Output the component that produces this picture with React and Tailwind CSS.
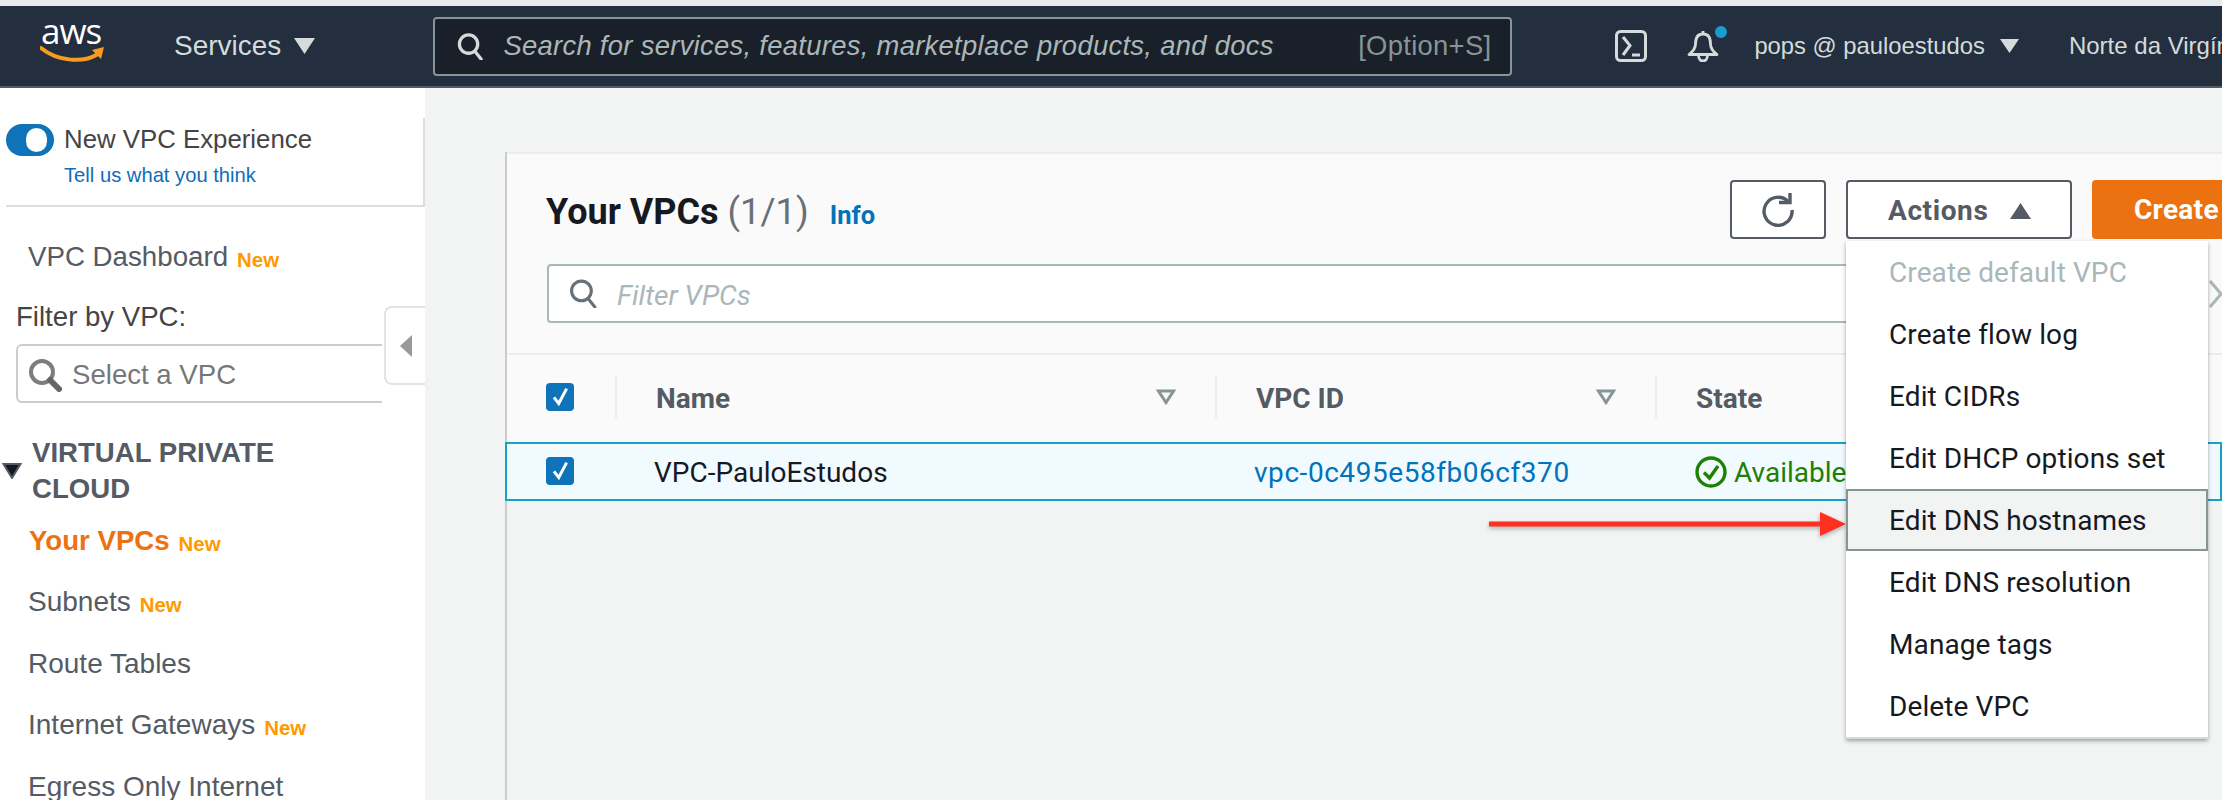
import React from "react";

const Caret = ({ up, className, fill }) => (
  <svg viewBox="0 0 20 16" className={`shrink-0 ${className}`} preserveAspectRatio="none">
    <polygon points={up ? "10,0 20,16 0,16" : "0,0 20,0 10,16"} fill={fill} />
  </svg>
);

const Search = ({ className, color, width = 2.6 }) => (
  <svg viewBox="0 0 28 28" className={className} fill="none" stroke={color} strokeWidth={width} strokeLinecap="round">
    <circle cx="12" cy="11.5" r="9.5" />
    <path d="M18.5 19 L25 27" />
  </svg>
);

const FilterTri = () => (
  <svg viewBox="0 0 20 16" className="w-[20px] h-[16px] shrink-0" fill="none" stroke="#879596" strokeWidth="3">
    <polygon points="2.5,2 17.5,2 10,13.5" />
  </svg>
);

const Check = ({ className }) => (
  <div className={`w-[28px] h-[28px] rounded-[4px] bg-[#0f73b9] flex items-center justify-center shrink-0 ${className || ""}`}>
    <svg viewBox="0 0 20 24" className="w-[19px] h-[21px]" fill="none" stroke="#fff" strokeWidth="3.4">
      <path d="M2.5 13 L8 20 L17 3" />
    </svg>
  </div>
);

const New = () => (
  <span className="text-[20.4px] font-bold text-[#ff9900] ml-[9px] relative top-[3px]">New</span>
);

const NavItem = ({ children, isNew, active }) => (
  <div className={`h-[61.5px] flex items-center pl-[28px] text-[28px] leading-[36px] ${active ? "font-bold text-[#ec7211]" : "text-[#545b64]"}`}>
    <span className={active ? "text-[27.6px] ml-[1px]" : ""}>{children}</span>
    {isNew && <New />}
  </div>
);

const MenuItem = ({ children, disabled, hover }) => (
  <div
    className={`h-[62px] flex items-center pt-[1px] text-[28px] tracking-[0.1px] [font-family:Roboto,sans-serif] ${
      disabled ? "text-[#aab7b8]" : "text-[#16191f]"
    } ${hover ? "bg-[#f2f3f3] border-2 border-[#879596] pl-[41px]" : "pl-[43px]"}`}
  >
    {children}
  </div>
);

const HeadCell = ({ width, children, filter }) => (
  <div className={`${width} h-full flex items-center shrink-0`}>
    <span className="w-[2px] h-[42px] bg-[#eaeded] shrink-0 -mt-[4px]" />
    <span className="ml-[39px] text-[28px] font-bold text-[#545b64]">{children}</span>
    {filter && (
      <span className="ml-auto mr-[39px] -mt-[4px] flex">
        <FilterTri />
      </span>
    )}
  </div>
);

export default function App() {
  return (
    <div className="w-[2222px] h-[800px] overflow-hidden flex flex-col bg-white [font-family:'Liberation_Sans',sans-serif]">
      <div className="h-[6px] bg-[#e8e9ea] shrink-0" />

      <header className="h-[82px] shrink-0 bg-[#232f3e] border-b-2 border-[#545b64] flex items-center text-[#d5dbdb]">
        <div className="w-[65px] ml-[40px] h-[42px] relative shrink-0 -mt-[8px]">
          <span className="absolute left-[1px] -top-[11px] text-[35px] leading-[42px] text-white [font-family:'Open_Sans',sans-serif] tracking-[-1px]">
            aws
          </span>
          <svg viewBox="0 0 65 20" className="absolute left-0 top-[24px] w-[65px] h-[20px]" fill="none">
            <path d="M1 3 C18 17 44 18 58 9" stroke="#f79c1e" strokeWidth="4" strokeLinecap="round" />
            <path d="M52 5 L64 2 L61 14 Z" fill="#f79c1e" />
          </svg>
        </div>
        <span className="ml-[69px] shrink-0 text-[28px] leading-[36px]">Services</span>
        <Caret className="ml-[13px] w-[21px] h-[16px]" fill="#d5dbdb" />

        <div className="ml-[118px] w-[1079px] h-[59px] shrink-0 bg-[#1a2029] border-2 border-[#879596] rounded-[4px] flex items-center pl-[22px]">
          <Search className="w-[27px] h-[27px] shrink-0" color="#d5dbdb" width="3.4" />
          <span className="ml-[19px] text-[27.4px] tracking-[0.3px] italic text-[#aab7b8] whitespace-nowrap">
            Search for services, features, marketplace products, and docs
          </span>
          <span className="ml-auto mr-[19px] text-[27.4px] tracking-[0.3px] text-[#879596] whitespace-nowrap">[Option+S]</span>
        </div>

        <svg viewBox="0 0 32 32" className="ml-[103px] w-[32px] h-[32px] shrink-0" fill="none" stroke="#d5dbdb" strokeWidth="3">
          <rect x="1.5" y="1.5" width="29" height="29" rx="4" />
          <path d="M8 7 L15 15.5 L8 25" />
          <path d="M17 25 L25 25" />
        </svg>

        <div className="ml-[40px] w-[32px] h-[32px] relative shrink-0">
          <svg viewBox="0 0 32 32" className="w-[32px] h-[32px]" fill="none" stroke="#d5dbdb" strokeWidth="2.8" strokeLinejoin="round">
            <path d="M16 1 L16 4 M16 4 C10 4 8.5 9 8.5 14 C8.5 19 6 21.5 2 24.5 L30 24.5 C26 21.5 23.5 19 23.5 14 C23.5 9 22 4 16 4 Z" />
            <path d="M11.5 25 C11.5 33 20.5 33 20.5 25" />
          </svg>
          <span className="absolute -right-[8px] -top-[4px] w-[12px] h-[12px] rounded-full bg-[#1a9ccf]" />
        </div>

        <span className="ml-[35px] shrink-0 text-[23.8px] whitespace-nowrap">pops @ pauloestudos</span>
        <Caret className="ml-[15px] w-[19px] h-[14px]" fill="#d5dbdb" />
        <span className="ml-[50px] shrink-0 text-[24px] whitespace-nowrap">Norte da Virgínia</span>
      </header>

      <div className="flex-1 flex min-h-0">
        <aside className="w-[425px] shrink-0 bg-white relative">
          <div className="mt-[30px] border-r-2 border-[#dddddd]">
            <div className="ml-[6px] border-b-2 border-[#dddddd] flex pt-[3px] pb-[18px]">
              <div className="mt-[3px] w-[48px] h-[32px] rounded-full bg-[#0f73b9] flex items-center justify-end pr-[7px] shrink-0">
                <span className="w-[21px] h-[24px] rounded-full bg-white" />
              </div>
              <div className="ml-[10px]">
                <div className="text-[25.8px] leading-[36px] text-[#444444]">New VPC Experience</div>
                <div className="mt-[6px] text-[20.2px] leading-[24px] text-[#0f6cbd]">Tell us what you think</div>
              </div>
            </div>
          </div>

          <div className="mt-[30px] h-[40px] flex items-center pl-[28px] text-[27.7px] text-[#545b64]">
            VPC Dashboard
            <New />
          </div>
          <div className="mt-[20px] h-[40px] flex items-center pl-[16px] text-[27.6px] text-[#444444]">Filter by VPC:</div>
          <div className="mt-[7px] ml-[16px] w-[366px] h-[59px] border-2 border-r-0 border-[#cccccc] rounded-l-[6px] flex items-center pl-[10px] pt-[2px]">
            <svg viewBox="0 0 34 34" className="w-[34px] h-[34px] shrink-0" fill="none">
              <circle cx="14" cy="14" r="11" stroke="#7d7d7d" strokeWidth="4" />
              <path d="M22 22 L31 31" stroke="#666666" strokeWidth="6" strokeLinecap="round" />
            </svg>
            <span className="ml-[10px] text-[27.6px] text-[#777777]">Select a VPC</span>
          </div>

          <div className="mt-[32px] flex items-center pl-[2px]">
            <svg viewBox="0 0 20 16" className="w-[20px] h-[16px] shrink-0" >
              <polygon points="1.5,1 18.5,1 10,15" fill="#16191f" stroke="#545b64" strokeWidth="2" />
            </svg>
            <div className="ml-[10px] text-[27.6px] leading-[36px] font-bold text-[#545b64]">
              VIRTUAL PRIVATE
              <br />
              CLOUD
            </div>
          </div>

          <div className="mt-[3px]">
            <NavItem active isNew>Your VPCs</NavItem>
            <NavItem isNew>Subnets</NavItem>
            <NavItem>Route Tables</NavItem>
            <NavItem isNew>Internet Gateways</NavItem>
            <NavItem>Egress Only Internet</NavItem>
          </div>

          <div className="absolute left-[384px] top-[218px] w-[42px] h-[79px] bg-white border-2 border-r-0 border-[#e3e3e3] rounded-l-[8px] flex items-center pl-[14px]">
            <svg viewBox="0 0 12 22" className="w-[12px] h-[22px]">
              <polygon points="12,0 12,22 0,11" fill="#999999" />
            </svg>
          </div>
        </aside>

        <main className="flex-1 min-w-0 bg-[#f2f3f3] pl-[80px] pt-[64px] relative flex flex-col [font-family:Roboto,sans-serif]">
          <section className="flex-1 flex flex-col border-l-2 border-[#cccccc]">
            <div className="bg-[#fafafa] border-t-2 border-b-2 border-[#eaeded] pt-[26px] pl-[40px] h-[203px] shrink-0">
              <div className="flex items-center h-[59px]">
                <h1 className="-ml-[1px] mt-[5px] text-[36px] leading-[44px] font-bold text-[#16191f]">Your VPCs</h1>
                <span className="mt-[5px] ml-[9px] text-[36.5px] leading-[44px] text-[#687078]">(1/1)</span>
                <span className="ml-[21px] mt-[11px] text-[25.5px] font-bold text-[#0073bb]">Info</span>

                <button className="ml-auto w-[96px] h-[59px] bg-white border-2 border-[#545b64] rounded-[4px] flex items-center justify-center shrink-0">
                  <svg viewBox="0 0 34 34" className="w-[34px] h-[34px]" fill="none" stroke="#545b64" strokeWidth="3.4">
                    <path d="M27.5 9 A14 14 0 1 0 31 17" />
                    <path d="M18 9.5 L29 9.5 L29 0" />
                  </svg>
                </button>
                <div className="ml-[20px] relative shrink-0">
                  <button className="w-[226px] h-[59px] bg-white border-2 border-[#545b64] rounded-[4px] flex items-center pl-[40px] pt-[2px] text-[28px] tracking-[0.6px] font-bold text-[#545b64]">
                    Actions
                    <Caret up className="ml-[22px] w-[21px] h-[16px]" fill="#545b64" />
                  </button>
                  <div className="absolute left-0 top-[61px] w-[362px] bg-white shadow-[0_2px_4px_rgba(0,0,0,0.35)] z-10 border-b-2 border-[#d5dbdb]">
                    <MenuItem disabled>Create default VPC</MenuItem>
                    <MenuItem>Create flow log</MenuItem>
                    <MenuItem>Edit CIDRs</MenuItem>
                    <MenuItem>Edit DHCP options set</MenuItem>
                    <MenuItem hover>Edit DNS hostnames</MenuItem>
                    <MenuItem>Edit DNS resolution</MenuItem>
                    <MenuItem>Manage tags</MenuItem>
                    <MenuItem>Delete VPC</MenuItem>
                  </div>
                </div>
                <button className="ml-[20px] w-[220px] h-[59px] -mr-[90px] shrink-0 bg-[#ec7211] rounded-[4px] text-left pl-[42px] pt-[1px] text-[28px] tracking-[0.3px] font-bold text-white">
                  Create VPC
                </button>
              </div>

              <div className="mt-[25px] flex items-center">
                <div className="w-[1645px] h-[59px] shrink-0 bg-white border-2 border-[#aab7b8] rounded-[4px] flex items-center pl-[20px]">
                  <Search className="w-[29px] h-[29px] shrink-0" color="#687078" width="3" />
                  <span className="ml-[19px] mt-[5px] text-[28px] italic text-[#aab7b8]">Filter VPCs</span>
                </div>
                <svg viewBox="0 0 14 30" className="ml-[16px] w-[14px] h-[30px] shrink-0" fill="none" stroke="#aab7b8" strokeWidth="3">
                  <path d="M2 2 L13 15 L2 28" />
                </svg>
              </div>
            </div>

            <div className="bg-[#fafafa] h-[87px] shrink-0 flex items-center">
              <div className="w-[108px] pl-[39px] shrink-0 -mt-[4px]">
                <Check />
              </div>
              <HeadCell width="w-[600px]" filter>Name</HeadCell>
              <HeadCell width="w-[440px]" filter>VPC ID</HeadCell>
              <HeadCell width="w-[400px]">State</HeadCell>
            </div>

            <div className="h-[59px] shrink-0 -ml-[2px] bg-[#f1faff] border-2 border-[#16a2c7] flex items-center text-[28px] relative">
              <div className="w-[108px] pl-[39px] shrink-0 -mt-[2px]">
                <Check />
              </div>
              <div className="w-[600px] pl-[39px] pt-[2px] shrink-0 text-[#16191f]">VPC-PauloEstudos</div>
              <div className="w-[440px] pl-[39px] pt-[2px] shrink-0 text-[#0073bb] tracking-[0.55px]">vpc-0c495e58fb06cf370</div>
              <div className="pl-[40px] flex items-center text-[#1d8102]">
                <svg viewBox="0 0 32 32" className="w-[32px] h-[32px] shrink-0" fill="none" stroke="#1d8102" strokeWidth="3.4">
                  <circle cx="16" cy="16" r="14" />
                  <path d="M9 16.5 L14.5 22 L23 10" />
                </svg>
                <span className="ml-[7px] pt-[2px]">Available</span>
              </div>
            </div>
          </section>

          <svg viewBox="0 0 357 24" className="absolute left-[1064px] top-[424px] w-[357px] h-[24px] drop-shadow-[0_2px_2px_rgba(0,0,0,0.3)]" >
            <rect x="0" y="9.5" width="334" height="5" fill="#ff3020" />
            <polygon points="331,0 357,12 331,24" fill="#ff3020" />
          </svg>
        </main>
      </div>
    </div>
  );
}
